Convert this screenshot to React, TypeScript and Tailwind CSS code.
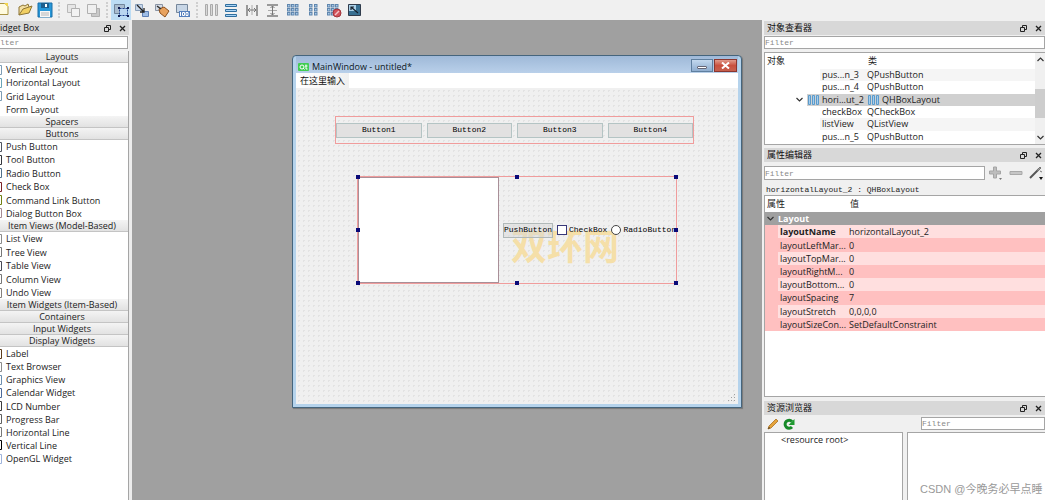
import React from 'react';
import { clsx } from 'clsx';

const SANS = "font-['Open_Sans','Noto_Sans_CJK_SC',sans-serif]";
const MONO = "font-['Liberation_Mono','Noto_Sans_CJK_SC',monospace]";

type Item = { name: string; color: string };
type Section = { title: string; height?: string; items?: Item[] };
type Tool = { label: string; icon: React.ReactNode; active?: boolean };

const sections: Section[] = [
  {
    title: 'Layouts',
    height: 'h-[53px]',
    items: [
      { name: 'Vertical Layout', color: '#7d9db5' },
      { name: 'Horizontal Layout', color: '#6aa5b8' },
      { name: 'Grid Layout', color: '#7d9db5' },
      { name: 'Form Layout', color: '#ffffff' },
    ],
  },
  { title: 'Spacers' },
  {
    title: 'Buttons',
    height: 'h-20',
    items: [
      { name: 'Push Button', color: '#4f5560' },
      { name: 'Tool Button', color: '#33363c' },
      { name: 'Radio Button', color: '#51708a' },
      { name: 'Check Box', color: '#7c2226' },
      { name: 'Command Link Button', color: '#6f7f12' },
      { name: 'Dialog Button Box', color: '#a58a92' },
    ],
  },
  {
    title: 'Item Views (Model-Based)',
    height: 'h-[67px]',
    items: [
      { name: 'List View', color: '#8a8a8a' },
      { name: 'Tree View', color: '#777777' },
      { name: 'Table View', color: '#4a4a55' },
      { name: 'Column View', color: '#777777' },
      { name: 'Undo View', color: '#85807c' },
    ],
  },
  { title: 'Item Widgets (Item-Based)' },
  { title: 'Containers' },
  { title: 'Input Widgets' },
  {
    title: 'Display Widgets',
    height: 'h-[118px]',
    items: [
      { name: 'Label', color: '#5b3b1c' },
      { name: 'Text Browser', color: '#8c8c8c' },
      { name: 'Graphics View', color: '#6d8fae' },
      { name: 'Calendar Widget', color: '#4c6a9a' },
      { name: 'LCD Number', color: '#3c3c3c' },
      { name: 'Progress Bar', color: '#5f5f5f' },
      { name: 'Horizontal Line', color: '#777777' },
      { name: 'Vertical Line', color: '#000000' },
      { name: 'OpenGL Widget', color: '#9fb4dc' },
    ],
  },
];

const objects = [
  { name: 'pus...n_3', type: 'QPushButton' },
  { name: 'pus...n_4', type: 'QPushButton' },
  { name: 'hori...ut_2', type: 'QHBoxLayout', selected: true },
  { name: 'checkBox', type: 'QCheckBox' },
  { name: 'listView', type: 'QListView' },
  { name: 'pus...n_5', type: 'QPushButton' },
];

const properties = [
  ['layoutName', 'horizontalLayout_2'],
  ['layoutLeftMar...', '0'],
  ['layoutTopMar...', '0'],
  ['layoutRightM...', '0'],
  ['layoutBottom...', '0'],
  ['layoutSpacing', '7'],
  ['layoutStretch', '0,0,0,0'],
  ['layoutSizeCon...', 'SetDefaultConstraint'],
];

const Svg = ({ children }: { children: React.ReactNode }) => (
  <svg viewBox="0 0 16 16" className="h-4 w-4" fill="none">{children}</svg>
);

const Dots = ({ xs }: { xs: number[] }) => (
  <>
    {xs.map((x) => [2, 6, 10].map((y) => (
      <rect key={`${x}-${y}`} x={x + 0.5} y={y + 0.5} width="2.5" height="2.5" fill="#a8c8e8" stroke="#5f86ad" />
    )))}
  </>
);

const toolGroups: Tool[][] = [
  [
    {
      label: 'Open',
      icon: <Svg><path d="M2 13V5l4-2 2 1 3-2 1 3" fill="#f3dfa0" stroke="#8d7536" /><path d="M2 13l4-6 9-3-3 7z" fill="#f1cf62" stroke="#8d7536" /></Svg>,
    },
    {
      label: 'Save',
      icon: <Svg><path d="M1 1h14v14H1z" fill="#2797d8" stroke="#1a6ea8" /><path d="M4 1h8v5H4z" fill="#1d5f8e" /><path d="M8 2h2v3H8z" fill="#fff" /><path d="M3 9h10v6H3z" fill="#f7f7f7" /><path d="M4 11h8M4 13h8" stroke="#b5b5b5" /></Svg>,
    },
  ],
  [
    { label: 'Send to back', icon: <Svg><path d="M2.5 2.5h8v8h-8z" fill="#e6e6e6" stroke="#b8b8b8" /><path d="M6.5 6.5h8v8h-8z" fill="#f2f2f2" stroke="#b0b0b0" /></Svg> },
    { label: 'Bring to front', icon: <Svg><path d="M6.5 6.5h8v8h-8z" fill="#c9c9c9" stroke="#b0b0b0" /><path d="M2.5 2.5h9v9h-9z" fill="#efefef" stroke="#b0b0b0" /></Svg> },
  ],
  [
    {
      label: 'Edit widgets',
      active: true,
      icon: <Svg><path d="M1.5 2.5h10v9h-10z" fill="#a9bccf" stroke="#70859b" /><path d="M6.5 6.5h8v7h-8z" fill="#b9d6f0" stroke="#20418c" strokeDasharray="2 1" /><path d="M5 5h2v2H5zM14 5h2v2h-2zM5 13h2v2H5zM14 13h2v2h-2z" fill="#101b50" /></Svg>,
    },
    {
      label: 'Edit signals/slots',
      icon: <Svg><path d="M1.5 2.5h7v6h-7z" fill="#c9d8ea" stroke="#8aa0bb" /><path d="M8.5 9.5h6v5h-6z" fill="#9ebde6" stroke="#5d7fb5" /><path d="M3 3l7 7M10 6v4H6" stroke="#222" strokeWidth="1.3" /></Svg>,
    },
    {
      label: 'Edit buddies',
      icon: <Svg><path d="M1.5 2.5h7v6h-7z" fill="#d5dce6" stroke="#8a94a4" /><path d="M5 7l5-2 5 4-4 6-5-4z" fill="#e8a25e" stroke="#8a4f1d" /><path d="M3 4l4 3" stroke="#333" strokeWidth="1.5" /></Svg>,
    },
    {
      label: 'Edit tab order',
      icon: <Svg><path d="M1.5 2.5h11v8h-11z" fill="#c8d6e6" stroke="#76879b" /><path d="M4 9h11v6H4z" fill="#557fbd" /><path d="M5.5 10v4M7.5 10.500h2v3h-2zM11 10.500h2v3h-2z" stroke="#fff" /></Svg>,
    },
  ],
  [
    { label: 'Lay out horizontally', icon: <Svg><path d="M2.5 2.5h2v11h-2zM7.5 2.5h2v11h-2zM12.5 2.5h2v11h-2z" fill="#d8d8d8" stroke="#aaa" /></Svg> },
    { label: 'Lay out vertically', icon: <Svg><path d="M2.5 2.5h11v2h-11zM2.5 7.5h11v2h-11zM2.5 12.5h11v2h-11z" fill="#a9d3f5" stroke="#2f6e9e" /></Svg> },
    { label: 'Horizontal splitter', icon: <Svg><path d="M3 3v11M13 3v11" stroke="#999" strokeWidth="2" /><path d="M8 3v10" stroke="#aaa" /><path d="M4 8h8M6 6L4 8l2 2M10 6l2 2-2 2" stroke="#777" /></Svg> },
    { label: 'Vertical splitter', icon: <Svg><path d="M3 3h11M3 14h11" stroke="#999" strokeWidth="2" /><path d="M4 8.5h9" stroke="#aaa" /><path d="M8.5 4v9M6.5 6l2-2 2 2M6.5 11l2 2 2-2" stroke="#777" /></Svg> },
    { label: 'Lay out in a grid', icon: <Svg><Dots xs={[2, 6, 10]} /></Svg> },
    { label: 'Lay out in a form', icon: <Svg><Dots xs={[4, 9]} /></Svg> },
    {
      label: 'Break layout',
      icon: <Svg><Dots xs={[1, 5, 9]} /><circle cx="11" cy="11" r="4" fill="#d2525a" stroke="#a1353b" /><path d="M9 13l4-4" stroke="#f3c6c8" strokeWidth="1.5" /></Svg>,
    },
    {
      label: 'Adjust size',
      icon: <Svg><path d="M2.5 2.5h12v11h-12z" fill="#376f91" stroke="#303c4c" /><path d="M3 3h7v6H3z" fill="#abd1e9" /><path d="M5 5l7 6M5 8V5h3" stroke="#15202c" strokeWidth="1.2" /></Svg>,
    },
  ],
];

const DockTitle = ({ title, className }: { title: string; className?: string }) => (
  <div className={clsx('flex h-[14px] shrink-0 items-center bg-[#d8d8d8] text-[#111]', className)}>
    <h2 className="min-w-0 flex-1 truncate leading-[14px]">{title}</h2>
    <button aria-label="Float" className="mr-2 h-[7px] w-[7px]">
      <svg viewBox="0 0 7 7" className="h-full w-full" fill="none" stroke="#222"><path d="M2.5 2V.5h4v4H5M.5 2.5h4v4h-4z" /></svg>
    </button>
    <button aria-label="Close" className="mr-[3px] h-[7px] w-[7px]">
      <svg viewBox="0 0 7 7" className="h-full w-full" stroke="#222" strokeWidth="1.3"><path d="M1 1l5 5M6 1L1 6" /></svg>
    </button>
  </div>
);

const Filter = ({ className, placeholder = 'Filter' }: { className?: string; placeholder?: string }) => (
  <input
    type="text"
    aria-label="Filter"
    placeholder={placeholder}
    className={clsx('h-[13px] min-w-0 border border-[#a5a5a5] bg-white text-[8px] placeholder:text-[#888] outline-none', MONO, className)}
  />
);

const Toolbar = () => (
  <div className="flex h-5 shrink-0 items-center bg-[#f0f0f0]">
    <button aria-label="New" className="mr-0.5 h-5 w-[13px]">
      <svg viewBox="0 0 13 20" className="h-5 w-[13px]"><path d="M-1 3.5h6l3 3v8h-9z" fill="#fffbe0" stroke="#a99445" /><path d="M4 3l4 4V3z" fill="#f5d74c" /></svg>
    </button>
    {toolGroups.map((group, i) => (
      <div key={i} className="flex items-center">
        {i > 0 && <span className="mx-[3px] h-4 border-l-2 border-dotted border-[#cfcfcf]" />}
        <div className={clsx('flex justify-between', i === 2 && 'w-[82px]', i === 3 && 'w-[163px]')}>
          {group.map((tool) => (
            <button
              key={tool.label}
              aria-label={tool.label}
              className={clsx('flex h-5 w-5 items-center justify-center', tool.active && 'bg-[#bcdcf4]')}
            >
              {tool.icon}
            </button>
          ))}
        </div>
      </div>
    ))}
  </div>
);

const WidgetBox = () => (
  <aside className="flex w-[132px] shrink-0 flex-col overflow-hidden border-r-[3px] border-[#ececec] bg-[#f0f0f0] pt-px">
    <DockTitle title="idget Box" />
    <Filter placeholder="lter" className="mt-px mr-px mb-0.5 shrink-0 border-l-0" />
    <div className="flex-1 border-r border-[#a5a5a5] bg-white">
      {sections.map((section) => (
        <section key={section.title}>
          <h3 className="h-3 border-b border-[#c4c4c4] bg-linear-to-b from-[#f4f4f4] to-[#e2e2e2] pr-1 text-center leading-[11px]">
            {section.title}
          </h3>
          {section.items && (
            <ul className={clsx('flex flex-col justify-between', section.height)}>
              {section.items.map((item) => (
                <li key={item.name} className="flex h-[13px] items-center gap-1 leading-[13px]">
                  <svg viewBox="0 0 2 10" className="h-[10px] w-0.5"><path d="M0 .5h1.5v9H0" fill="none" stroke={item.color} /></svg>
                  {item.name}
                </li>
              ))}
            </ul>
          )}
        </section>
      ))}
    </div>
  </aside>
);

const handles = [
  'top-0 left-0', 'top-0 left-1/2', 'top-0 left-full',
  'top-1/2 left-0', 'top-1/2 left-full',
  'top-full left-0', 'top-full left-1/2', 'top-full left-full',
];

const FormWindow = () => (
  <div className="flex h-[353px] w-[450px] flex-col rounded-t-[4px] border border-[#45657d] bg-[#b5d3ec] p-[3px] pt-0 shadow-[1px_1px_1px_#777]">
    <div className="flex h-[17px] shrink-0 items-center bg-linear-to-b from-[#9fb9d8] to-[#b9d0ea]">
      <svg viewBox="0 0 11 8" className="mt-[5px] ml-0.5 h-2 w-[11px]">
        <rect width="11" height="8" rx="1" fill="#41cd52" />
        <path d="M5 5l1.5 1.5M8 1.5v4.5h1.5M7 3h2.5" stroke="#fff" fill="none" />
        <circle cx="4" cy="4" r="2" stroke="#fff" fill="none" />
      </svg>
      <span className="mt-[5px] ml-[3px] flex-1 leading-3 text-[#0c1622]">MainWindow - untitled*</span>
      <button aria-label="Minimize" className="mt-0.5 mr-px flex h-[13px] w-[22px] items-center justify-center border border-[#5f7f9f] bg-linear-to-b from-[#c3d8ee] to-[#8fadcf]">
        <span className="mt-1 h-[3px] w-[10px] rounded-[1px] border border-[#667] bg-white" />
      </button>
      <button aria-label="Close" className="mt-0.5 mr-px flex h-[13px] w-[23px] items-center justify-center border border-[#8a3630] bg-linear-to-b from-[#e09a8c] via-[#c9503f] to-[#c6604e]">
        <svg viewBox="0 0 9 7" className="h-[7px] w-[9px]" stroke="#fff" strokeWidth="2"><path d="M1 .5l7 6M8 .5l-7 6" /></svg>
      </button>
    </div>
    <div className="flex h-[15px] shrink-0 bg-white pl-1">
      <button className="bg-linear-to-r from-white to-[#f0f0f0] pr-1 leading-[15px] text-[#111]">在这里输入</button>
    </div>
    <div className="relative flex-1 bg-[#f0f0f0] bg-[radial-gradient(circle,#e3e3e3_1px,transparent_1px)] bg-size-[5px_5px] pt-7 pr-[44px] pl-[39px]">
      <div className={clsx('flex h-7 items-center gap-[5px] border border-[#f09c9c] text-[8px] text-black', MONO)}>
        {[1, 2, 3, 4].map((n) => (
          <button key={n} className="h-[15px] flex-1 border border-[#b4c4c4] bg-[#e2e1e1]">{`Button${n}`}</button>
        ))}
      </div>
      <div className={clsx('relative mt-8 mr-[17px] ml-[22px] flex h-[108px] items-center border border-[#f09c9c] text-[8px] text-black', MONO)}>
        <div className="mr-1 h-full w-[141px] shrink-0 border border-[#a98f98] bg-white" />
        <button className="relative z-10 h-[15px] w-[50px] shrink-0 border border-[#b0b8b8] bg-[#d8d8d8]/50">PushButton</button>
        <label className="relative z-10 ml-1 flex shrink-0 items-center gap-0.5">
          <input type="checkbox" className="h-[10px] w-[10px] appearance-none border border-[#38387a] bg-white" />
          CheckBox
        </label>
        <label className="relative z-10 ml-1 flex shrink-0 items-center gap-0.5">
          <input type="radio" className="h-[10px] w-[10px] appearance-none rounded-full border border-[#444] bg-white" />
          RadioButton
        </label>
        {handles.map((place) => (
          <span key={place} className={clsx('absolute z-20 h-1 w-1 -translate-1/2 bg-[#0a0a78]', place)} />
        ))}
        <span className="absolute top-[49px] left-[153px] font-['Noto_Sans_CJK_SC',sans-serif] text-[36px] leading-9 font-bold whitespace-nowrap text-[#f5dfa8]">
          双环网
        </span>
      </div>
      <svg viewBox="0 0 8 8" className="absolute right-0.5 bottom-0.5 h-2 w-2" fill="#a0a0a0">
        <path d="M6 0h1v1H6zM3 3h1v1H3zM6 3h1v1H6zM0 6h1v1H0zM3 6h1v1H3zM6 6h1v1H6z" />
      </svg>
    </div>
  </div>
);

const LayoutIcon = () => (
  <svg viewBox="0 0 11 10" className="h-[10px] w-[11px] shrink-0" fill="#a4cdee" stroke="#5b9bcb">
    <path d="M.5.5h2v9h-2zM4.5.5h2v9h-2zM8.5.5h2v9h-2z" />
  </svg>
);

const Chevron = ({ up }: { up?: boolean }) => (
  <svg viewBox="0 0 7 5" className="h-[5px] w-[7px]" fill="none" stroke="#333" strokeWidth="1.2">
    <path d={up ? 'M.5 4l3-3 3 3' : 'M.5 1l3 3 3-3'} />
  </svg>
);

const ObjectInspector = () => (
  <section className="flex shrink-0 flex-col">
    <DockTitle title="对象查看器" className="pl-[3px]" />
    <Filter className="mt-px mb-[3px]" />
    <div className="flex h-[93px] items-start border border-r-0 border-[#a5a5a5] bg-white">
      <table className="h-[90px] flex-1 table-fixed border-collapse">
        <colgroup>
          <col className="w-[42px]" />
          <col className="w-[60px]" />
          <col />
        </colgroup>
        <thead>
          <tr className="h-4 text-left leading-3">
            <th colSpan={2} className="pl-0.5 font-normal">对象</th>
            <th className="pl-px font-normal">类</th>
          </tr>
        </thead>
        <tbody>
          {objects.map((obj, i) => (
            <tr key={i} className="h-3 leading-3">
              <td className="p-0">
                {obj.selected && <div className="flex justify-end pr-1"><Chevron /></div>}
              </td>
              <td className={clsx('p-0 whitespace-nowrap', obj.selected && 'bg-[#d0d0d0]')}>
                <div className={clsx('flex items-center', obj.selected ? 'gap-[3px] pl-px' : 'ml-[13px] pl-0.5', i % 4 === 0 && 'bg-[#f5f5f5]')}>
                  {obj.selected && <LayoutIcon />}
                  {obj.name}
                </div>
              </td>
              <td className={clsx('p-0', obj.selected ? 'bg-[#d0d0d0]' : i % 2 === 0 && 'bg-[#f5f5f5]')}>
                <div className={clsx('flex items-center', obj.selected && 'gap-[3px] pl-px')}>
                  {obj.selected && <LayoutIcon />}
                  {obj.type}
                </div>
              </td>
            </tr>
          ))}
        </tbody>
      </table>
      <div className="flex h-full w-[10px] shrink-0 flex-col items-center bg-[#f0f0f0] py-1">
        <Chevron up />
        <span className="mt-[27px] mb-auto h-[29px] w-full bg-[#cdcdcd]" />
        <Chevron />
      </div>
    </div>
  </section>
);

const PropertyEditor = () => (
  <section className="mt-[3px] flex min-h-0 flex-1 flex-col">
    <DockTitle title="属性编辑器" className="pl-[3px]" />
    <div className="flex h-[22px] shrink-0 items-center">
      <Filter className="h-[14px] flex-1" />
      <button aria-label="Add property" className="ml-1 h-[14px] w-[14px]">
        <svg viewBox="0 0 14 14"><path d="M4.500 1h3v4h4v3h-4v4h-3V8h-4V5h4z" fill="#bdbdbd" stroke="#a5a5a5" /><path d="M10 12h3l-1.5 2z" fill="#777" /></svg>
      </button>
      <button aria-label="Remove property" className="ml-1.5 h-[14px] w-[14px]">
        <svg viewBox="0 0 14 14"><path d="M1 5.5h12v3H1z" fill="#c6c6c6" stroke="#a9a9a9" /></svg>
      </button>
      <button aria-label="Configure" className="ml-1.5 mr-0.5 h-[14px] w-[14px]">
        <svg viewBox="0 0 14 14"><path d="M1 12L10 3" stroke="#555" strokeWidth="2" /><path d="M8 4l3-3 1 1-3 3zM11 5l2 1" fill="#999" stroke="#777" /><path d="M10 11h4l-2 3z" fill="#111" /></svg>
      </button>
    </div>
    <p className={clsx('h-[11px] shrink-0 pl-0.5 text-[8px] leading-[11px] text-[#222]', MONO)}>horizontalLayout_2 : QHBoxLayout</p>
    <div className="min-h-0 flex-1 border border-r-0 border-[#a5a5a5] bg-white">
      <table className="h-[135px] w-full table-fixed border-collapse">
        <colgroup>
          <col className="w-[13px]" />
          <col className="w-[71px]" />
          <col />
        </colgroup>
        <thead>
          <tr className="h-4 text-left">
            <th colSpan={2} className="pl-0.5 font-normal">属性</th>
            <th className="pl-px font-normal">值</th>
          </tr>
        </thead>
        <tbody>
          <tr className="h-[13px] bg-[#a0a0a0] leading-[13px] font-bold text-white">
            <td className="p-0"><div className="flex pl-0.5"><Chevron /></div></td>
            <td colSpan={2} className="p-0">Layout</td>
          </tr>
          {properties.map(([name, value], i) => (
            <tr key={name} className={clsx('h-[13px] leading-[13px]', i % 2 ? 'bg-[#ffc0c0]' : 'bg-[#ffdfdf]')}>
              <td className="bg-[#ffc0c0] p-0" />
              <td className={clsx('p-0 pl-0.5 whitespace-nowrap', i === 0 && 'font-bold')}>{name}</td>
              <td className="p-0">{value}</td>
            </tr>
          ))}
        </tbody>
      </table>
    </div>
  </section>
);

const ResourceBrowser = () => (
  <section className="mt-1 flex h-[99px] shrink-0 flex-col">
    <DockTitle title="资源浏览器" className="pl-[3px]" />
    <div className="flex h-[17px] shrink-0 items-center pl-[3px]">
      <button aria-label="Edit resources" className="h-3 w-3">
        <svg viewBox="0 0 12 12"><path d="M1 11l1-3 7-7 2 2-7 7z" fill="#e5a33b" stroke="#b98338" /><path d="M1 11l1-2 1 1z" fill="#222" /></svg>
      </button>
      <button aria-label="Reload" className="ml-1 h-3 w-3">
        <svg viewBox="0 0 12 12" fill="none"><path d="M9 3.5A4 4 0 1 0 9 9" stroke="#168a28" strokeWidth="3" /><path d="M11.5 1v6h-6z" fill="#1f9a30" /></svg>
      </button>
      <Filter className="ml-auto w-[124px]" />
    </div>
    <div className="flex min-h-0 flex-1 gap-1">
      <div className="w-[139px] border border-b-0 border-[#a5a5a5] bg-white pl-4 leading-[13px]">&lt;resource root&gt;</div>
      <div className="flex flex-1 items-end border border-r-0 border-b-0 border-[#a5a5a5] bg-white pb-[3px] pl-3 font-['Liberation_Sans','Noto_Sans_CJK_SC',sans-serif] text-[11px] leading-4 whitespace-nowrap text-[#999]">
        CSDN @今晚务必早点睡
      </div>
    </div>
  </section>
);

const App = () => (
  <div className={clsx('flex h-screen flex-col overflow-hidden bg-[#f0f0f0] text-[9px] text-[#222]', SANS)}>
    <Toolbar />
    <div className="flex min-h-0 flex-1">
      <WidgetBox />
      <main className="min-w-0 flex-1 overflow-hidden bg-[#a0a0a0] pt-[35px] pl-[160px]">
        <FormWindow />
      </main>
      <aside className="flex w-[283px] shrink-0 flex-col overflow-hidden bg-[#f0f0f0] pt-px pl-0.5">
        <ObjectInspector />
        <PropertyEditor />
        <ResourceBrowser />
      </aside>
    </div>
  </div>
);

export default App;
